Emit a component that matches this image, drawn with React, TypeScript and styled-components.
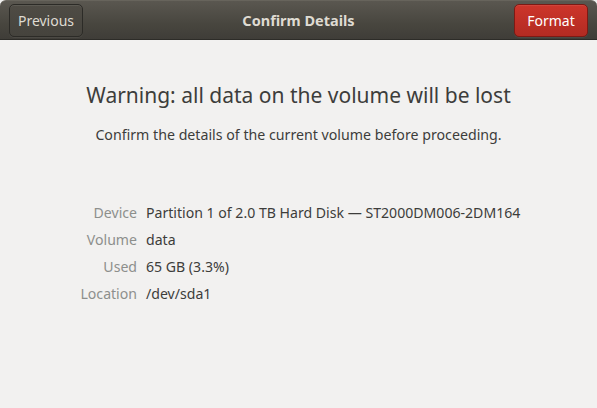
import styled, { createGlobalStyle } from "styled-components";

const GlobalStyle = createGlobalStyle`
  html, body {
    margin: 0;
    padding: 0;
    background: #f2f1f0;
  }
  body {
    font-family: "Noto Sans", "DejaVu Sans", sans-serif;
  }
`;

const details = [
  { label: "Device", value: "Partition 1 of 2.0 TB Hard Disk — ST2000DM006-2DM164" },
  { label: "Volume", value: "data" },
  { label: "Used", value: "65 GB (3.3%)" },
  { label: "Location", value: "/dev/sda1" },
];

const App = () => {
  return (
    <>
      <GlobalStyle />
      <Window>
        <HeaderBar>
          <HeaderButton>Previous</HeaderButton>
          <Title>Confirm Details</Title>
          <HeaderButton $destructive>Format</HeaderButton>
        </HeaderBar>
        <Content>
          <Heading>Warning: all data on the volume will be lost</Heading>
          <Subtitle>Confirm the details of the current volume before proceeding.</Subtitle>
          <DetailGrid>
            {details.map((d) => (
              <DetailRow key={d.label}>
                <Label>{d.label}</Label>
                <Value>{d.value}</Value>
              </DetailRow>
            ))}
          </DetailGrid>
        </Content>
      </Window>
    </>
  );
};

export default App;

/* Styled Components */
const Window = styled.div`
  width: 597px;
  height: 408px;
  display: flex;
  flex-direction: column;
  background: #f2f1f0;
  overflow: hidden;
`;

const HeaderBar = styled.div`
  height: 40px;
  display: flex;
  align-items: center;
  justify-content: space-between;
  padding: 0 9px;
  box-sizing: border-box;
  background: linear-gradient(to bottom, #5a5750 0%, #48463f 60%, #3f3d38 100%);
  border-top: 1px solid #67645c;
  border-bottom: 1px solid #2d2c28;
  border-radius: 6px 6px 0 0;
`;

const Title = styled.div`
  font-size: 14.5px;
  font-weight: bold;
  color: #dfdbd2;
`;

const HeaderButton = styled.button<{ $destructive?: boolean }>`
  height: 33px;
  width: 74px;
  font-family: inherit;
  font-size: 14px;
  border-radius: 5px;
  cursor: pointer;
  color: ${({ $destructive }) => ($destructive ? "#ffffff" : "#dfdbd2")};
  border: 1px solid ${({ $destructive }) => ($destructive ? "#7c1a14" : "#2c2b27")};
  background: ${({ $destructive }) =>
    $destructive
      ? "linear-gradient(to bottom, #cd352b, #b22b22)"
      : "linear-gradient(to bottom, #4f4c45, #45433d)"};
  box-shadow: inset 0 1px rgba(255, 255, 255, 0.08), 0 1px rgba(255, 255, 255, 0.06);
`;

const Content = styled.div`
  flex: 1;
  display: flex;
  flex-direction: column;
  align-items: center;
  padding-top: 41px;
`;

const Heading = styled.div`
  font-size: 21px;
  color: #3d3d3b;
  line-height: 28px;
`;

const Subtitle = styled.div`
  margin-top: 17px;
  font-size: 14.2px;
  color: #3d3d3b;
  line-height: 18px;
`;

const DetailGrid = styled.div`
  align-self: stretch;
  margin-top: 55px;
  display: flex;
  flex-direction: column;
`;

const DetailRow = styled.div`
  display: grid;
  grid-template-columns: 137px 1fr;
  column-gap: 9px;
  height: 27px;
  align-items: center;
  font-size: 14.1px;
`;

const Label = styled.div`
  text-align: right;
  color: #8d8f8c;
`;

const Value = styled.div`
  color: #3d3d3b;
`;
